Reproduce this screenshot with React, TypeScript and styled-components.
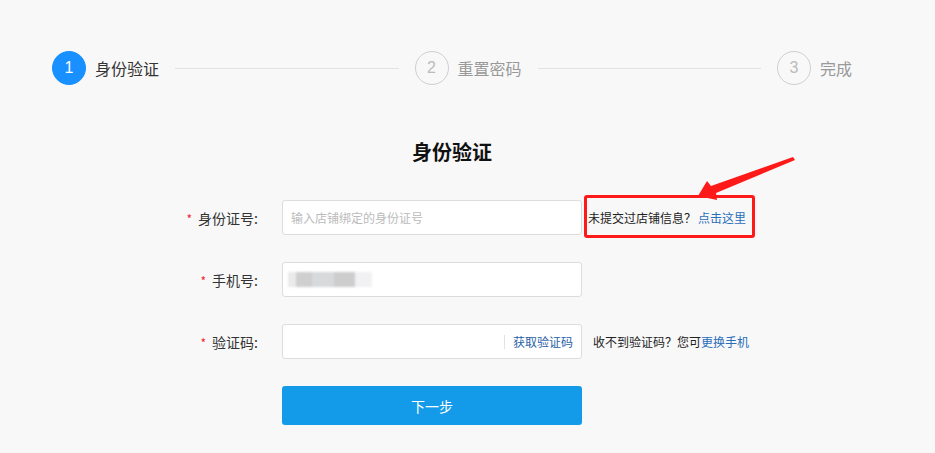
import React from 'react';
import styled, { createGlobalStyle } from 'styled-components';

const GlobalStyle = createGlobalStyle`
  html, body {
    margin: 0;
    padding: 0;
    background: #f8f8f8;
  }
  body {
    font-family: "Microsoft YaHei", "Noto Sans CJK SC", "Liberation Sans", sans-serif;
    color: #333;
  }
  * { box-sizing: border-box; }
`;

const Page = styled.div`
  position: relative;
  width: 935px;
  height: 453px;
  overflow: hidden;
  background: #f8f8f8;
`;

const Steps = styled.div`
  display: flex;
  align-items: center;
  padding: 51px 83px 0 52px;
`;

const Step = styled.div`
  display: flex;
  align-items: center;
  gap: 9px;
`;

const Circle = styled.div<{ active?: boolean }>`
  width: 34px;
  height: 34px;
  border-radius: 50%;
  display: flex;
  align-items: center;
  justify-content: center;
  font-family: "Liberation Sans", Arial, sans-serif;
  font-size: 16px;
  color: ${({ active }) => (active ? '#fff' : '#bbb')};
  background: ${({ active }) => (active ? '#1890ff' : 'transparent')};
  border: 1px solid ${({ active }) => (active ? '#1890ff' : '#cfcfcf')};
`;

const StepLabel = styled.span<{ active?: boolean }>`
  font-size: 16px;
  color: ${({ active }) => (active ? '#333' : '#999')};
`;

const Line = styled.div`
  flex: 1;
  height: 1px;
  background: #e2e2e2;
  margin: 0 16px;
`;

const Title = styled.h2`
  margin: 55px 0 0;
  padding-right: 31px;
  text-align: center;
  font-size: 20px;
  font-weight: bold;
  color: #111;
  line-height: 24px;
`;

const Form = styled.div`
  margin-top: 36px;
  display: flex;
  flex-direction: column;
  gap: 27px;
`;

const Row = styled.div`
  display: flex;
  align-items: center;
  height: 35px;
`;

const Label = styled.label`
  width: 258px;
  text-align: right;
  font-size: 14px;
  color: #333;
`;

const Star = styled.span`
  color: #f5222d;
  font-size: 12px;
  margin-right: 6px;
`;

const InputBox = styled.div`
  margin-left: 24px;
  width: 300px;
  height: 35px;
  background: #fff;
  border: 1px solid #dcdcdc;
  border-radius: 3px;
  display: flex;
  align-items: center;
  padding: 0 8px;
`;

const TextInput = styled.input`
  flex: 1;
  min-width: 0;
  padding: 0;
  border: none;
  outline: none;
  background: transparent;
  font-family: inherit;
  font-size: 12px;
  color: #333;
  &::placeholder {
    color: #bbb;
  }
`;

const Blurred = styled.span`
  display: block;
  width: 84px;
  height: 15px;
  margin-left: -3px;
  background: linear-gradient(
    to right,
    #eaeaea 0 10%,
    #cfcfcf 10% 28%,
    #d7d9db 28% 55%,
    #cdcdcd 55% 80%,
    #f1f1f3 80% 100%
  );
  filter: blur(1px);
`;

const CodeButton = styled.span`
  font-size: 12px;
  color: #2a5fa8;
  border-left: 1px solid #e2e2e2;
  padding-left: 8px;
  line-height: 14px;
`;

const Hint = styled.span<{ gap: number }>`
  position: relative;
  margin-left: ${({ gap }) => gap}px;
  font-size: 12px;
  color: #222;
  white-space: nowrap;
`;

const HintLink = styled.a<{ gap?: number }>`
  color: #2a6ebb;
  text-decoration: none;
  margin-left: ${({ gap }) => gap ?? 2}px;
`;

const Highlight = styled.span`
  position: absolute;
  left: -4px;
  top: -14px;
  width: 171px;
  height: 43px;
  border: 3px solid #ff1a1a;
  border-radius: 3px;
  pointer-events: none;
`;

const SubmitRow = styled.div`
  padding-left: 282px;
`;

const Submit = styled.button`
  width: 300px;
  height: 39px;
  border: none;
  border-radius: 3px;
  background: #139be9;
  color: #fff;
  font-family: inherit;
  font-size: 14px;
  cursor: pointer;
`;

const Arrow = styled.svg`
  position: absolute;
  left: 0;
  top: 0;
  pointer-events: none;
`;

export default function App() {
  return (
    <Page>
      <GlobalStyle />
      <Steps>
        <Step>
          <Circle active>1</Circle>
          <StepLabel active>身份验证</StepLabel>
        </Step>
        <Line />
        <Step>
          <Circle>2</Circle>
          <StepLabel>重置密码</StepLabel>
        </Step>
        <Line />
        <Step>
          <Circle>3</Circle>
          <StepLabel>完成</StepLabel>
        </Step>
      </Steps>

      <Title>身份验证</Title>

      <Form>
        <Row>
          <Label><Star>*</Star>身份证号:</Label>
          <InputBox>
            <TextInput placeholder="输入店铺绑定的身份证号" />
          </InputBox>
          <Hint gap={6}>
            未提交过店铺信息？<HintLink>点击这里</HintLink>
            <Highlight />
          </Hint>
        </Row>
        <Row>
          <Label><Star>*</Star>手机号:</Label>
          <InputBox>
            <Blurred />
          </InputBox>
        </Row>
        <Row>
          <Label><Star>*</Star>验证码:</Label>
          <InputBox>
            <TextInput />
            <CodeButton>获取验证码</CodeButton>
          </InputBox>
          <Hint gap={11}>
            收不到验证码？您可<HintLink gap={0}>更换手机</HintLink>
          </Hint>
        </Row>
        <SubmitRow>
          <Submit>下一步</Submit>
        </SubmitRow>
      </Form>

      <Arrow width="935" height="453" viewBox="0 0 935 453">
        <polygon
          points="698,196 707,181 711,186 793,157 795,160 716,193 717,200"
          fill="#ff1a1a"
        />
      </Arrow>
    </Page>
  );
}
